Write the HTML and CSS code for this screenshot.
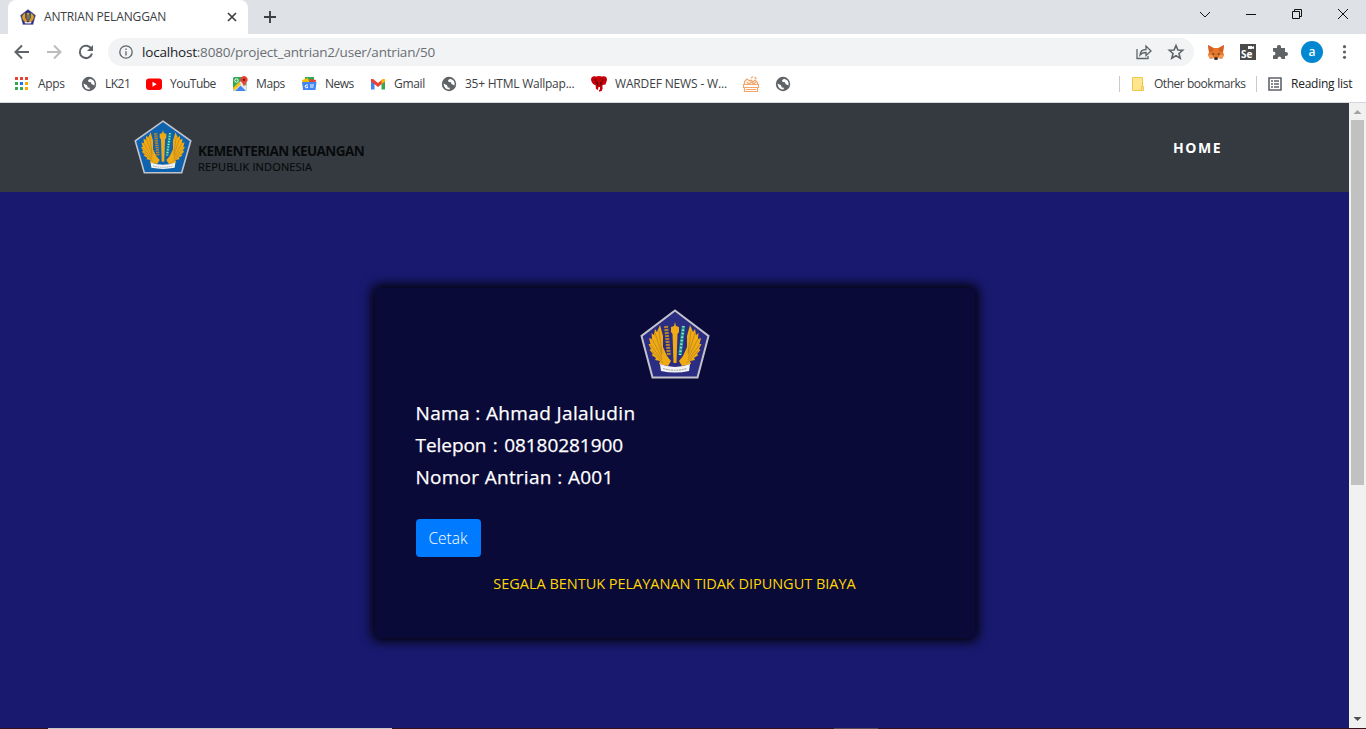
FILE: index.html
```html
<!DOCTYPE html>
<html lang="id">
<head>
<meta charset="utf-8">
<title>ANTRIAN PELANGGAN</title>
<link rel="stylesheet" href="styles.css">
</head>
<body>
<svg class="defs" width="0" height="0">
  <symbol id="emblem" viewBox="0 0 70 70" preserveAspectRatio="none">
    <path class="shield" d="M35 1.5 68.5 27 57.5 68.5H12.5L1.5 27Z"/>
    <g id="wing">
      <path class="gold" d="M20 16 17 23 15 20 14 26 11.500 24 12 30 9 29 10.500 35 8.500 35 11 40 9.500 41 13 45 11.500 46 16 49 15 51 20 52 19 55 28 57 31 52 27 47 23 38 23 27Z"/>
      <path class="feather" d="M19 22 22 44M15 24 22 46M12 30 22 49M10.500 36 22 51M12 42 23 54"/>
    </g>
    <use href="#wing" transform="translate(70 0) scale(-1 1)"/>
    <path class="gold" d="M35 13 36 17 39 18V23L37.500 25 36.500 54H33.500L32.500 25 31 23V18L34 17Z"/>
    <path class="paddy" d="M26 17 29 47"/>
    <path class="leaf" d="M43.500 17 40 46"/><path class="cotton" d="M43.500 17 40 46"/>
    <path class="ribbon" d="M20 55Q35 61 50 55L49 62Q35 65 21 62Z"/>
    <path class="motto" d="M23 59.500Q35 63 47 59.500"/>
  </symbol>
  <symbol id="globe" viewBox="0 0 16 16">
    <circle cx="8" cy="8" r="7.200" fill="#5f6368"/>
    <path d="M2.500 7.500 6 9.200 6.800 11.500 9 11.700 8.500 13.500Q3 13.500 2.500 7.500ZM9 2.700 7 4.200 7.600 6 10 6.200 10.500 8 13.500 9.500Q14.500 4 9 2.700Z" fill="#fff"/>
  </symbol>
</svg>

<header class="browser">
  <div class="tabstrip">
    <div class="tab">
      <svg class="favicon"><use href="#emblem"/></svg>
      <span class="tab-title">ANTRIAN PELANGGAN</span>
      <svg class="tab-close" viewBox="0 0 10 10"><path d="M1 1 9 9M9 1 1 9"/></svg>
    </div>
    <svg class="tab-new" viewBox="0 0 14 14"><path d="M7 1V13M1 7H13"/></svg>
    <div class="window-buttons">
      <svg viewBox="0 0 12 12"><path d="M1 4 6 9 11 4"/></svg>
      <svg viewBox="0 0 12 12"><path d="M1 6.500H11"/></svg>
      <svg viewBox="0 0 12 12"><path d="M1.500 3.500H8.500V10.500H1.500ZM3.500 3V1.500H10.500V8.500H9"/></svg>
      <svg viewBox="0 0 12 12"><path d="M1 1 11 11M11 1 1 11"/></svg>
    </div>
  </div>

  <div class="toolbar">
    <div class="nav-buttons">
      <svg viewBox="0 0 16 16"><path d="M15 8H2M8 1.500 1.500 8 8 14.500"/></svg>
      <svg class="disabled" viewBox="0 0 16 16"><path d="M1 8H14M8 1.500 14.500 8 8 14.500"/></svg>
      <svg viewBox="0 0 16 16"><path d="M13.500 5A6.200 6.200 0 1 0 14 9.500"/><path class="solid" d="M15 1V7H9Z"/></svg>
    </div>
    <div class="omnibox">
      <svg class="info" viewBox="0 0 14 14"><circle cx="7" cy="7" r="6.200"/><path d="M7 6.200V10.500M7 3.500V5"/></svg>
      <span class="url"><b>localhost</b>:8080/project_antrian2/user/antrian/50</span>
      <svg class="share" viewBox="0 0 16 16"><path d="M1 5V14.500H12V12M4 11Q4.500 5.500 10 5.500V2L15 7 10 11.500V8.500Q6 8.500 4 11Z"/></svg>
      <svg class="star" viewBox="0 0 16 16"><path d="M8 1.500 9.900 6 14.700 6.300 11 9.500 12.200 14.200 8 11.600 3.800 14.200 5 9.500 1.300 6.300 6.100 6Z"/></svg>
    </div>
    <div class="extensions">
      <svg viewBox="0 0 16 16"><path d="M0 1 6 4H10L16 1 15 8 16 11 14 15 10 14 9 16H7L6 14 2 15 0 11 1 8Z" fill="#e8772a"/><path d="M0 1 6 5 4 8 1 8ZM16 1 10 5 12 8 15 8Z" fill="#d35f22"/><path d="M4 9 7 10 5 11ZM12 9 9 10 11 11ZM7 13H9L10 15 9 16H7L6 15Z" fill="#263644"/><path d="M0 11 4 11 6 14 2 15ZM16 11 12 11 10 14 14 15Z" fill="#f29a55"/></svg>
      <svg viewBox="0 0 16 16"><path d="M0 0H16V16H0Z" fill="#4a4a4a"/><path d="M8 2H12V3L14 2V5L12 4.500V5H8Z" fill="#fff"/><text x="1" y="14" class="se">Se</text></svg>
      <svg viewBox="0 0 16 16"><path d="M1 4H5Q4.500 1 7 1T9 4H13V8Q16 7.500 16 10T13 12V15H9.500Q9.500 12.500 7.500 12.500T5.500 15H1V11.500Q3.500 11.500 3.500 9.500T1 7.500Z" fill="#5f6368"/></svg>
      <span class="avatar">a</span>
      <svg viewBox="0 0 16 16" fill="#5f6368"><circle cx="8.500" cy="2.700" r="1.600"/><circle cx="8.500" cy="8" r="1.600"/><circle cx="8.500" cy="13.300" r="1.600"/></svg>
    </div>
  </div>

  <nav class="bookmarks">
    <div class="bm apps"><svg viewBox="0 0 16 16"><path d="M1 1H4V4H1ZM6 1H9V4H6ZM11 1H14V4H11Z" fill="#ea4335"/><path d="M1 6H4V9H1ZM1 11H4V14H1ZM6 11H9V14H6Z" fill="#34a853"/><path d="M6 6H9V9H6Z" fill="#1a73e8"/><path d="M11 6H14V9H11ZM11 11H14V14H11Z" fill="#fbab00"/></svg><span>Apps</span></div>
    <div class="bm lk"><svg><use href="#globe"/></svg><span>LK21</span></div>
    <div class="bm youtube"><svg viewBox="0 0 16 16"><rect y="2.500" width="16" height="11.500" rx="3" fill="#f00"/><path d="M6.500 5.800V10.700L10.700 8.200Z" fill="#fff"/></svg><span>YouTube</span></div>
    <div class="bm maps"><svg viewBox="0 0 16 16"><rect x="1" y="1" width="13.500" height="14" rx="1.500" fill="#34a853"/><path d="M1 13 9 5 14.500 10V15H2Z" fill="#e8eaed"/><path d="M3 15 8.500 9.500 14 15Z" fill="#4285f4"/><path d="M1 12 7 6 9 8 2 15Z" fill="#fbc116"/><circle cx="4.500" cy="4.500" r="1.700" fill="none" stroke="#fff"/><path d="M12 0A3.800 3.800 0 0 0 8.500 5Q11 7 12 10.500 13 7 15.500 5A3.800 3.800 0 0 0 12 0Z" fill="#ea4335"/><circle cx="12" cy="3.800" r="1.300" fill="#811411"/></svg><span>Maps</span></div>
    <div class="bm news"><svg viewBox="0 0 16 16"><path d="M4 1H13V8H4Z" fill="#34a853"/><path d="M1 4 7 2 9 8 2 9Z" fill="#fbbc04"/><path d="M15 4 9 3 8 9 14 9Z" fill="#ea4335"/><path d="M1 6H15.500L14.500 14H2Z" fill="#4285f4"/><path d="M7 9H5A1.500 1.500 0 1 0 7 11H5.500M9 9H13M9 11H12.500" fill="none" stroke="#fff"/></svg><span>News</span></div>
    <div class="bm gmail"><svg viewBox="0 0 16 16"><path d="M1 4 4.500 6V13.500H1Z" fill="#4285f4"/><path d="M11.500 6 15 4V13.500H11.500Z" fill="#34a853"/><path d="M1 3H3L8 7 13 3H15V5.500L8 11 1 5.500Z" fill="#ea4335"/><path d="M11.500 4.200 13 3H15V5.500L11.500 8Z" fill="#fbbc04"/></svg><span>Gmail</span></div>
    <div class="bm wallpaper"><svg><use href="#globe"/></svg><span>35+ HTML Wallpap...</span></div>
    <div class="bm wardef"><svg viewBox="0 0 16 16"><path d="M5 .5Q8-.5 11 .5 16-.5 16 4L14.500 8.500 11.500 9V13Q11 16 8 15.500V14L9 13.500V11H7.500L7 14 5 13 4.500 9Q1.500 9 0 4 0-.5 5 .5Z" fill="#c5000b"/><path d="M4 3 6 8M12 3 10 8M7 10 6 6M9 10 10 6" stroke="#610006" fill="none"/></svg><span>WARDEF NEWS - W...</span></div>
    <div class="bm icon-only"><svg viewBox="0 0 16 16" fill="none" stroke="#f3a66b" stroke-width="1.200"><path d="M.5 8.500H15.500V11.500H.5ZM1.500 11.500H14.500V15.500H1.500ZM3 13.500H13"/><path d="M1.500 8.500V5.500L4 3 6.500 5 8 4 10 6 12 4 14.500 6.500V8.500M3.500 6 6 8 8.500 6 10.500 8 13 6M8 2 10 .500M11.500 1 13.500 3"/></svg></div>
    <div class="bm icon-only"><svg><use href="#globe"/></svg></div>
    <div class="bm other"><svg viewBox="0 0 16 16"><path d="M2.500 1.500H12.500V14.500H2.500Z" fill="#ffe58e" stroke="#ecc94c"/><path d="M11.500 10.500H13.500V14.500H11.500Z" fill="#ffe58e" stroke="#ecc94c"/></svg><span>Other bookmarks</span></div>
    <div class="bm reading"><svg viewBox="0 0 16 16"><path d="M2 2H14V14H2Z" fill="none" stroke="#5f6368" stroke-width="1.600"/><path d="M4 5H6M7 5H12M4 8H6M7 8H12M4 11H6M7 11H12" stroke="#5f6368" stroke-width="1.500"/></svg><span>Reading list</span></div>
  </nav>
</header>

<div class="viewport">
  <main class="page">
    <div class="navbar">
      <svg class="brand-emblem"><use href="#emblem"/></svg>
      <div class="brand"><strong>KEMENTERIAN KEUANGAN</strong><span>REPUBLIK INDONESIA</span></div>
      <a class="home">HOME</a>
    </div>
    <section class="content">
      <div class="card">
        <svg class="card-emblem"><use href="#emblem"/></svg>
        <p class="row name">Nama : Ahmad Jalaludin</p>
        <p class="row phone">Telepon : 08180281900</p>
        <p class="row queue">Nomor Antrian : A001</p>
        <button class="print">Cetak</button>
        <p class="notice">SEGALA BENTUK PELAYANAN TIDAK DIPUNGUT BIAYA</p>
      </div>
    </section>
  </main>
  <div class="scrollbar">
    <svg viewBox="0 0 17 17"><path d="M4.500 11 8.500 7 12.500 11Z" fill="#a3a3a3"/></svg>
    <div class="thumb"></div>
    <svg class="down" viewBox="0 0 17 17"><path d="M4.500 6 8.500 10 12.500 6Z" fill="#505050"/></svg>
  </div>
</div>
<footer class="taskbar"><i></i><i></i></footer>
</body>
</html>
```
FILE: styles.css
```css
* { box-sizing: border-box; }
body { margin: 0; width: 1366px; height: 729px; overflow: hidden; display: flex; flex-direction: column; font-family: "Open Sans", "Noto Sans", sans-serif; color: #3c4043; }
svg { display: block; flex: none; overflow: visible; }
p { margin: 0; }
span, p, a, strong { white-space: nowrap; }
.defs { position: absolute; }

/* emblem */
.shield { fill: var(--shield, #2b2d83); stroke: #c3c3cb; stroke-width: 2; }
.gold { fill: #f0aa13; }
.feather { stroke: #a17528; stroke-width: .6; fill: none; }
.paddy { stroke: #b8842d; stroke-width: 4; stroke-dasharray: 2 1; fill: none; }
.leaf { stroke: #168f86; stroke-width: 3.500; fill: none; }
.cotton { stroke: #a9e0d5; stroke-width: 2.200; stroke-dasharray: 1.500 2; fill: none; }
.ribbon { fill: #f4f4f4; }
.motto { stroke: #aaa; stroke-width: 1.200; stroke-dasharray: 2 .7; fill: none; }

/* browser frame */
.browser { height: 103px; background: #fff; border-bottom: 1px solid #d5d7da; flex: none; }
.tabstrip { height: 34px; background: #dee1e6; display: flex; align-items: center; padding-left: 8px; }
.tab { width: 240px; height: 34px; background: #fff; border-radius: 8px 8px 0 0; display: flex; align-items: center; padding: 0 11px 0 12px; }
.favicon { width: 16px; height: 16px; margin-right: 8px; }
.tab-title { flex: 1; font-size: 12px; letter-spacing: -.15px; padding-bottom: 1px; }
.tab-close { width: 10px; height: 10px; fill: none; stroke: #3c4043; stroke-width: 1.700; }
.tab-new { width: 14px; height: 14px; margin-left: 15px; fill: none; stroke: #3c4043; stroke-width: 1.900; }
.window-buttons { margin-left: auto; display: flex; gap: 34px; padding: 0 17px 6px 0; }
.window-buttons svg { width: 12px; height: 12px; fill: none; stroke: #111; stroke-width: 1; }

.toolbar { height: 36px; display: flex; align-items: center; }
.nav-buttons { width: 108px; display: flex; gap: 16px; padding-left: 14px; }
.nav-buttons svg { width: 16px; height: 16px; fill: none; stroke: #5f6368; stroke-width: 2; }
.nav-buttons .disabled { stroke: #babcbe; }
.nav-buttons .solid { fill: #5f6368; stroke: none; }
.omnibox { width: 1086px; height: 28px; border-radius: 14px; background: #f1f3f4; display: flex; align-items: center; padding: 0 12px 0 11px; }
.omnibox svg { fill: none; stroke: #5f6368; stroke-width: 1.300; }
.info { width: 14px; height: 14px; margin-right: 9px; }
.url { flex: 1; font-size: 13.500px; color: #6b6f74; letter-spacing: -.2px; line-height: 28px; }
.url b { font-weight: 400; color: #202124; }
.share, .star { width: 16px; height: 16px; margin-left: 16px; }
.star { stroke-width: 1.600 !important; margin-right: -2px; }
.extensions { display: flex; align-items: center; padding-left: 14px; gap: 16px; }
.extensions svg { width: 16px; height: 16px; }
.se { font: 700 10px "Open Sans", sans-serif; fill: #fff; }
.avatar { width: 22px; height: 22px; margin: 0 -3px; border-radius: 50%; background: #0288d1; color: #fff; font-size: 12px; font-weight: 600; line-height: 21px; text-align: center; }

.bookmarks { height: 28px; display: flex; gap: 16px; padding: 0 14px; font-size: 12px; }
.bm { height: 28px; display: flex; align-items: center; gap: 8px; }
.bm svg { width: 16px; height: 16px; }
.bm span { padding-bottom: 1px; }
.apps span { width: 27px; letter-spacing: -.3px; }
.lk span { width: 25px; letter-spacing: -.5px; }
.youtube span { width: 46px; letter-spacing: -.5px; }
.maps span { width: 29px; letter-spacing: -.4px; }
.news span { width: 29px; letter-spacing: -.5px; }
.gmail span { width: 31px; letter-spacing: -.3px; }
.wallpaper span { width: 110px; letter-spacing: -.24px; }
.wardef span { width: 112px; letter-spacing: -.15px; }
.other { margin-left: auto; }
.other::before, .reading::before { content: ""; width: 1px; height: 16px; background: #c8cacd; }
.other::before { margin-right: 2px; }
.other span { width: 92px; letter-spacing: -.46px; }
.reading { margin-left: -6px; }
.reading::before { margin-right: 2px; }
.reading span { width: 61px; color: #202124; letter-spacing: -.25px; }

/* page */
.viewport { height: 625px; display: flex; flex: none; }
.page { width: 1349px; background: #191970; }
.navbar { height: 89px; background: #343a40; display: flex; padding: 0 127px 0 134px; }
.brand-emblem { width: 58px; height: 54px; margin-top: 17px; --shield: #0e62ae; }
.brand { display: flex; flex-direction: column; margin: 38px 0 0 6px; color: #080a0c; }
.brand strong { font-size: 13.500px; line-height: 20px; letter-spacing: -.57px; }
.brand span { font-size: 11px; line-height: 12px; letter-spacing: .15px; font-weight: 500; -webkit-text-stroke: .2px #080a0c; }
.home { margin-left: auto; line-height: 90px; font-size: 14px; font-weight: 700; color: #fff; letter-spacing: 1.500px; }
.content { display: flex; justify-content: center; padding-top: 96px; }
.card { width: 600px; height: 350px; background: #0a0a38; border-radius: 4px; box-shadow: 0 0 12px 3px #000; padding: 21px 41px; display: flex; flex-direction: column; }
.card-emblem { width: 70px; height: 70px; align-self: center; margin-bottom: 18px; }
.row { height: 32px; line-height: 32px; font-size: 19px; font-weight: 500; color: #fff; -webkit-text-stroke: .25px #fff; }
.name { letter-spacing: .37px; }
.phone { letter-spacing: -.05px; word-spacing: 1.500px; }
.queue { letter-spacing: .22px; word-spacing: .5px; }
.print { width: 65px; height: 38px; padding: 0; margin-top: 26px; border: 0; border-radius: 4px; background: #007bff; color: #fff; font: 300 15.500px "Open Sans", sans-serif; }
.notice { align-self: center; margin-top: 15px; font-size: 14.500px; line-height: 24px; font-weight: 400; color: #ffd700; letter-spacing: -.02px; }
.scrollbar { width: 17px; background: #f1f1f1; display: flex; flex-direction: column; }
.scrollbar svg { width: 17px; height: 17px; }
.thumb { height: 365px; margin: 0 2px; background: #c1c1c1; }
.down { margin-top: auto; }
.taskbar { height: 1px; background: #34101f; display: flex; gap: 442px; padding-left: 48px; }
.taskbar i { width: 344px; background: #c5c5c5; }
.taskbar i + i { width: 44px; background: #5a4550; }
```
